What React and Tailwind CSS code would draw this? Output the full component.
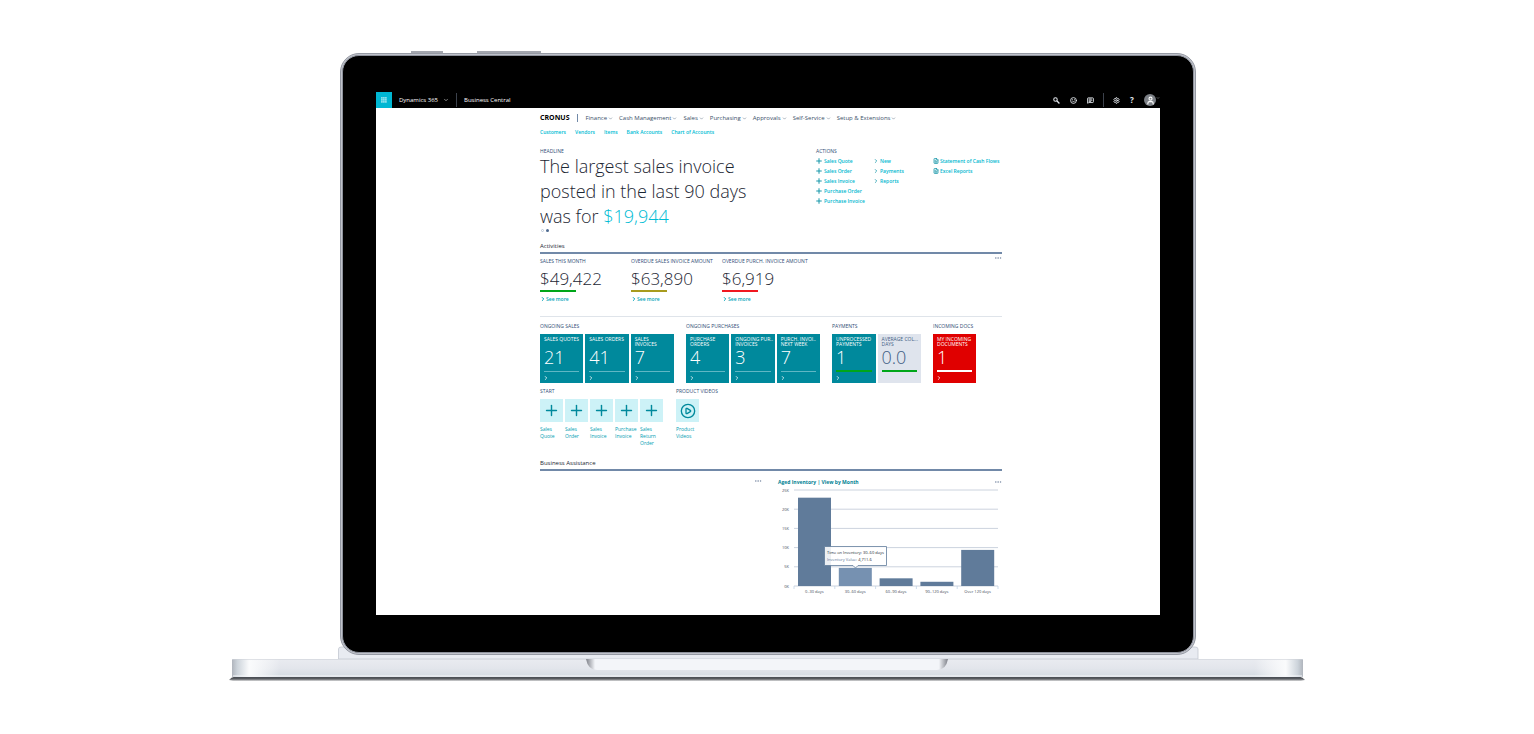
import React, { useState } from 'react';
import { Search, Smile, MessageSquareText, Settings, User, ChevronDown, ChevronRight, Plus, Ellipsis, FileText, CirclePlay } from 'lucide-react';

const menus = ['Finance', 'Cash Management', 'Sales', 'Purchasing', 'Approvals', 'Self-Service', 'Setup & Extensions'];
const links = ['Customers', 'Vendors', 'Items', 'Bank Accounts', 'Chart of Accounts'];

const actions = [
  { icon: Plus, size: 'size-2 -ml-px', items: ['Sales Quote', 'Sales Order', 'Sales Invoice', 'Purchase Order', 'Purchase Invoice'] },
  { icon: ChevronRight, size: 'size-1.5 -ml-px', items: ['New', 'Payments', 'Reports'] },
  { icon: FileText, size: 'size-1.5', items: ['Statement of Cash Flows', 'Excel Reports'] },
];

const kpis = [
  { label: 'SALES THIS MONTH', value: '$49,422', bar: 'bg-[#00a619]' },
  { label: 'OVERDUE SALES INVOICE AMOUNT', value: '$63,890', bar: 'bg-[#a89b1e]' },
  { label: 'OVERDUE PURCH. INVOICE AMOUNT', value: '$6,919', bar: 'bg-[#f01820]' },
];

const teal = 'bg-[#00899c] text-white';
const cueGroups = [
  {
    title: 'ONGOING SALES', size: 'w-[134px] grid-cols-3',
    tiles: [
      { label: ['SALES QUOTES'], value: '21', color: teal },
      { label: ['SALES ORDERS'], value: '41', color: teal },
      { label: ['SALES', 'INVOICES'], value: '7', color: teal },
    ],
  },
  {
    title: 'ONGOING PURCHASES', size: 'w-[134px] grid-cols-3',
    tiles: [
      { label: ['PURCHASE', 'ORDERS'], value: '4', color: teal },
      { label: ['ONGOING PUR..', 'INVOICES'], value: '3', color: teal },
      { label: ['PURCH. INVOI..', 'NEXT WEEK'], value: '7', color: teal },
    ],
  },
  {
    title: 'PAYMENTS', size: 'w-[89px] grid-cols-2',
    tiles: [
      { label: ['UNPROCESSED', 'PAYMENTS'], value: '1', color: teal, bar: 'h-0.5 bg-[#00a619]' },
      { label: ['AVERAGE COL...', 'DAYS'], value: '0.0', color: 'bg-[#dfe4ed] text-[#3f5f85]', bar: 'h-0.5 bg-[#00a619]', noArrow: true },
    ],
  },
  {
    title: 'INCOMING DOCS', size: 'w-[43px] grid-cols-1',
    tiles: [
      { label: ['MY INCOMING', 'DOCUMENTS'], value: '1', color: 'bg-[#e00000] text-white', bar: 'h-0.5 bg-white' },
    ],
  },
];

const startItems = ['Sales Quote', 'Sales Order', 'Sales Invoice', 'Purchase Invoice', 'Sales Return Order'];

const bars = [
  { label: '0..30 days', value: 23000 },
  { label: '30..60 days', value: 4711.6 },
  { label: '60..90 days', value: 2000 },
  { label: '90..120 days', value: 1100 },
  { label: 'Over 120 days', value: 9400 },
];

const Label = ({ children }) => (
  <h3 className="text-[5px] leading-[6px] font-medium whitespace-nowrap text-[#2f4c75]">{children}</h3>
);

const SectionTitle = ({ children }) => (
  <h2 className="border-b-2 border-[#7189a8] pb-0.5 text-[6px] leading-[8px] font-medium text-[#1c2633]">{children}</h2>
);

const MoreButton = () => (
  <button type="button" aria-label="More options" className="block text-[#7c8da6]">
    <Ellipsis size={8} strokeWidth={2} />
  </button>
);

const TopBar = () => (
  <header className="flex h-4 items-center bg-black text-[6px] leading-[8px] font-medium text-white">
    <button type="button" aria-label="App launcher" className="flex size-4 items-center justify-center bg-[#00b7d3]">
      <svg viewBox="0 0 6 6" className="size-1.5" fill="#d5f6fb">
        {[0, 1, 2].map((r) => [0, 1, 2].map((c) => (
          <rect key={`${r}${c}`} x={c * 2 + 0.2} y={r * 2 + 0.2} width="1.4" height="1.4" />
        )))}
      </svg>
    </button>
    <button type="button" className="ml-[7px] flex items-center gap-[5px]">
      Dynamics 365 <ChevronDown size={6} strokeWidth={2} />
    </button>
    <span className="mx-[7px] h-[14px] w-px bg-[#3c424c]" />
    <span>Business Central</span>
    <div className="ml-auto flex items-center text-[#e5e9ef]">
      <button type="button" aria-label="Search" className="mr-2.5">
        <svg viewBox="0 0 24 24" className="size-[7px]" fill="none" stroke="currentColor">
          <circle cx="8.500" cy="8.500" r="6" strokeWidth="3.500" />
          <path d="M13 13l9 9" strokeWidth="4.500" />
        </svg>
      </button>
      <button type="button" aria-label="Feedback" className="mr-2.5"><Smile size={7} strokeWidth={3} /></button>
      <button type="button" aria-label="Messages"><MessageSquareText size={7} strokeWidth={3} /></button>
      <span className="mx-[9px] h-[14px] w-px bg-[#3c424c]" />
      <button type="button" aria-label="Settings" className="mr-2.5"><Settings size={7} strokeWidth={3} /></button>
      <button type="button" aria-label="Help" className="mr-2.5 w-1 text-[8px] font-bold">?</button>
      <button type="button" aria-label="Account" className="flex size-3 items-center justify-center rounded-full bg-[#7c8086] text-white">
        <User size={9} strokeWidth={3} />
      </button>
      <ChevronDown size={4} className="mb-1" />
    </div>
  </header>
);

const CueTile = ({ tile }) => (
  <button type="button" className={`flex h-[49px] flex-col px-1 pt-[3px] pb-0.5 text-left ${tile.color}`}>
    <span className="block h-[11px] text-[5px] leading-[5px] font-medium whitespace-nowrap">
      {tile.label.map((line) => <span key={line} className="block">{line}</span>)}
    </span>
    <span className="block text-[18px] leading-[18px] font-light">{tile.value}</span>
    <span className="mt-1 flex h-0.5 w-full items-center">
      <span className={`block w-full ${tile.bar || 'h-px bg-[#5fb7c4]'}`} />
    </span>
    {!tile.noArrow && <ChevronRight size={6} strokeWidth={3} className="mt-[3px] -ml-px" />}
  </button>
);

const AgedInventory = () => {
  const [active, setActive] = useState(1);
  const y = (v) => 100 - (v / 25000) * 96;
  return (
    <svg viewBox="0 0 224 110" className="block w-full" role="img" aria-label="Aged inventory by month">
      {[0, 5, 10, 15, 20, 25].map((k) => (
        <g key={k}>
          <line x1="16" x2="220" y1={y(k * 1000)} y2={y(k * 1000)} stroke="#ccd3de" strokeWidth="1" />
          <text x="11" y={y(k * 1000) + 1.5} textAnchor="end" className="fill-[#3f4a59] text-[4px] font-medium">{k}K</text>
        </g>
      ))}
      {[0, 1, 2, 3, 4, 5].map((i) => (
        <line key={i} x1={16 + i * 40.8} x2={16 + i * 40.8} y1="100" y2="103" stroke="#c3d3e6" strokeWidth="0.8" />
      ))}
      {bars.map((b, i) => (
        <g key={b.label} onMouseEnter={() => setActive(i)}>
          <rect x={20 + i * 40.8} y={y(b.value)} width="33" height={100 - y(b.value)} fill={i === active ? '#7691b1' : '#607b9a'} />
          <text x={36.4 + i * 40.8} y="107" textAnchor="middle" className="fill-[#3f4a59] text-[4px] font-medium">{b.label}</text>
        </g>
      ))}
      {/* Tooltip */}
      <path d="M46.5 60.500h62v19H80l-2.500 2.500-2.500-2.500H46.500z" fill="#fff" fillOpacity="0.88" stroke="#607b9a" strokeWidth="0.8" />
      <text x="49" y="68" className="fill-[#222b36] text-[4px] font-medium">Time on Inventory: 30..60 days</text>
      <text x="49" y="75" className="fill-[#5b7598] text-[4px] font-medium">
        Inventory Value: <tspan className="fill-[#222]">4,711.6</tspan>
      </text>
    </svg>
  );
};

const RoleCenter = () => (
  <main className="bg-white pr-[158px] pb-[19px] pl-[164px] text-[#1c2633]">
    {/* Navigation */}
    <nav className="flex h-5 items-center text-[6px] leading-[8px] text-[#3a5068]">
      <a href="#home" className="text-[7px] font-bold text-black">CRONUS</a>
      <span className="mr-2 ml-[7px] h-2 w-px bg-[#7189a8]" />
      <div className="flex gap-1.5">
        {menus.map((m) => (
          <button key={m} type="button" className="flex items-center gap-px whitespace-nowrap">
            {m} <ChevronDown size={5} />
          </button>
        ))}
      </div>
    </nav>
    <nav className="flex h-2 items-center gap-[9px] text-[5px] leading-[8px] font-semibold text-[#00bcd4]">
      {links.map((l) => <a key={l} href="#list" className="whitespace-nowrap">{l}</a>)}
    </nav>

    {/* Headline and actions */}
    <section className="mt-3 grid grid-cols-[276px_1fr]">
      <div>
        <Label>HEADLINE</Label>
        <h1 className="text-[18px] leading-[25px] font-light">
          The largest sales invoice<br />posted in the last 90 days<br />was for <span className="text-[#00bcd4]">$19,944</span>
        </h1>
        <div className="flex gap-0.5 pl-px">
          <span className="size-[3px] rounded-full border border-[#b9c6d6]" />
          <span className="size-[3px] rounded-full bg-[#4d6a90]" />
        </div>
      </div>
      <div>
        <Label>ACTIONS</Label>
        <div className="mt-0.5 grid grid-cols-[58px_59px_1fr]">
          {actions.map(({ icon: Icon, size, items }) => (
            <ul key={items[0]} className="text-[5px] leading-[10px] font-semibold text-[#00b7cf]">
              {items.map((item) => (
                <li key={item}>
                  <a href="#action" className="flex items-center gap-px whitespace-nowrap">
                    <Icon strokeWidth={3} className={`text-[#1797a9] ${size}`} /> {item}
                  </a>
                </li>
              ))}
            </ul>
          ))}
        </div>
      </div>
    </section>

    {/* Activities */}
    <section className="mt-2.5">
      <SectionTitle>Activities</SectionTitle>
      <div className="flex items-start pt-1">
        {kpis.map((k) => (
          <div key={k.label} className="w-[91px]">
            <Label>{k.label}</Label>
            <p className="mt-1 text-[17px] leading-[22px] font-light">{k.value}</p>
            <span className={`block h-0.5 w-9 ${k.bar}`} />
            <a href="#more" className="mt-1 flex items-center text-[5px] leading-[6px] font-semibold text-[#00a3b8]">
              <ChevronRight size={6} strokeWidth={4} /> See more
            </a>
          </div>
        ))}
        <div className="-mt-1 ml-auto"><MoreButton /></div>
      </div>
      <hr className="mt-3.5 border-[#dfe4ea]" />
      <div className="mt-1.5 flex gap-3">
        {cueGroups.map((g) => (
          <div key={g.title}>
            <Label>{g.title}</Label>
            <div className={`mt-[5px] grid gap-0.5 ${g.size}`}>
              {g.tiles.map((t) => <CueTile key={t.label[0]} tile={t} />)}
            </div>
          </div>
        ))}
      </div>
      <div className="mt-[5px] flex gap-[13px] text-[5px] leading-[7px] font-medium text-[#009db2]">
        <div>
          <Label>START</Label>
          <div className="mt-[5px] flex gap-0.5">
            {startItems.map((s) => (
              <a key={s} href="#new" className="block w-[23px]">
                <span className="mb-1 flex h-[23px] items-center justify-center bg-[#cdf2f7] text-[#00899c]">
                  <Plus size={17} strokeWidth={2} />
                </span>
                {s}
              </a>
            ))}
          </div>
        </div>
        <div>
          <Label>PRODUCT VIDEOS</Label>
          <a href="#videos" className="mt-[5px] block w-[23px]">
            <span className="mb-1 flex h-[23px] items-center justify-center bg-[#cdf2f7] text-[#00899c]">
              <CirclePlay size={16} strokeWidth={2} />
            </span>
            Product Videos
          </a>
        </div>
      </div>
    </section>

    {/* Business Assistance */}
    <section className="mt-3">
      <SectionTitle>Business Assistance</SectionTitle>
      <div className="grid grid-cols-[222px_1fr] gap-4 pt-1.5">
        <div className="flex items-start justify-end"><MoreButton /></div>
        <div>
          <div className="flex h-[9px] items-center justify-between">
            <h3 className="text-[5px] leading-[8px] font-bold text-[#008294]">Aged Inventory | View by Month</h3>
            <MoreButton />
          </div>
          <AgedInventory />
        </div>
      </div>
    </section>
  </main>
);

const LaptopBase = () => (
  <svg viewBox="0 0 1076 38" className="-mt-[9px] block w-full max-w-[1076px]" aria-hidden="true">
    <defs>
      <linearGradient id="deck" x1="0" y1="0" x2="0" y2="1">
        <stop offset="0" stopColor="#e9ebf0" />
        <stop offset="0.5" stopColor="#e3e6ec" />
        <stop offset="1" stopColor="#d3dae2" />
      </linearGradient>
      <linearGradient id="ends" x1="0" y1="0" x2="1" y2="0">
        <stop offset="0" stopColor="#b0b5bd" />
        <stop offset="0.005" stopColor="#cdd4db" />
        <stop offset="0.016" stopColor="#fafbfc" />
        <stop offset="0.045" stopColor="#fff" stopOpacity="0" />
        <stop offset="0.955" stopColor="#fff" stopOpacity="0" />
        <stop offset="0.984" stopColor="#fafbfc" />
        <stop offset="0.995" stopColor="#cdd4db" />
        <stop offset="1" stopColor="#b0b5bd" />
      </linearGradient>
      <linearGradient id="notch" x1="0" y1="0" x2="1" y2="0">
        <stop offset="0" stopColor="#7d8088" />
        <stop offset="0.025" stopColor="#f3f5f9" />
        <stop offset="0.975" stopColor="#f3f5f9" />
        <stop offset="1" stopColor="#7d8088" />
      </linearGradient>
      <linearGradient id="shadow" x1="0" y1="0" x2="0" y2="1">
        <stop offset="0" stopColor="#42464d" />
        <stop offset="0.5" stopColor="#5b5e63" />
        <stop offset="1" stopColor="#fff" />
      </linearGradient>
    </defs>
    <path d="M109.500 13V3q0-2 3-2H966q3 0 3 2v10z" fill="#e8ebf1" stroke="#c3c8d0" strokeWidth="0.8" />
    <path d="M0 34q2-3 6-3.500H1070q4 .5 6 3.500l-6 1.500H6z" fill="url(#shadow)" />
    <rect x="3" y="13" width="1071" height="18" rx="1" fill="url(#deck)" />
    <rect x="3" y="13" width="1071" height="18" rx="1" fill="url(#ends)" />
    <path d="M3 13.500H1074" stroke="#cfd2d9" strokeWidth="0.6" />
    <path d="M4 30H1073" stroke="#f4f6f9" strokeWidth="1" />
    <path d="M357 13H719q-2 11-11 11H368q-9 0-11-11z" fill="url(#notch)" />
  </svg>
);

export default function App() {
  return (
    <div className="flex min-h-screen flex-col items-center bg-white pt-[51px] font-['Open_Sans',sans-serif]">
      <div className="relative z-10 w-full max-w-[858px] pl-0.5">
        {/* Power and volume keys */}
        <div className="flex h-0.5 gap-[34px] pl-[71px]">
          <span className="w-8 bg-[#a3a6ae]" />
          <span className="w-16 bg-[#a3a6ae]" />
        </div>
        <div className="rounded-[19px] border border-[#9599a3] bg-[#bfc2ca] p-px">
          <div className="rounded-[17px] border border-[#8e929c] bg-black px-[33px] pt-9 pb-[37px]">
            <TopBar />
            <RoleCenter />
          </div>
        </div>
      </div>
      <LaptopBase />
    </div>
  );
}
